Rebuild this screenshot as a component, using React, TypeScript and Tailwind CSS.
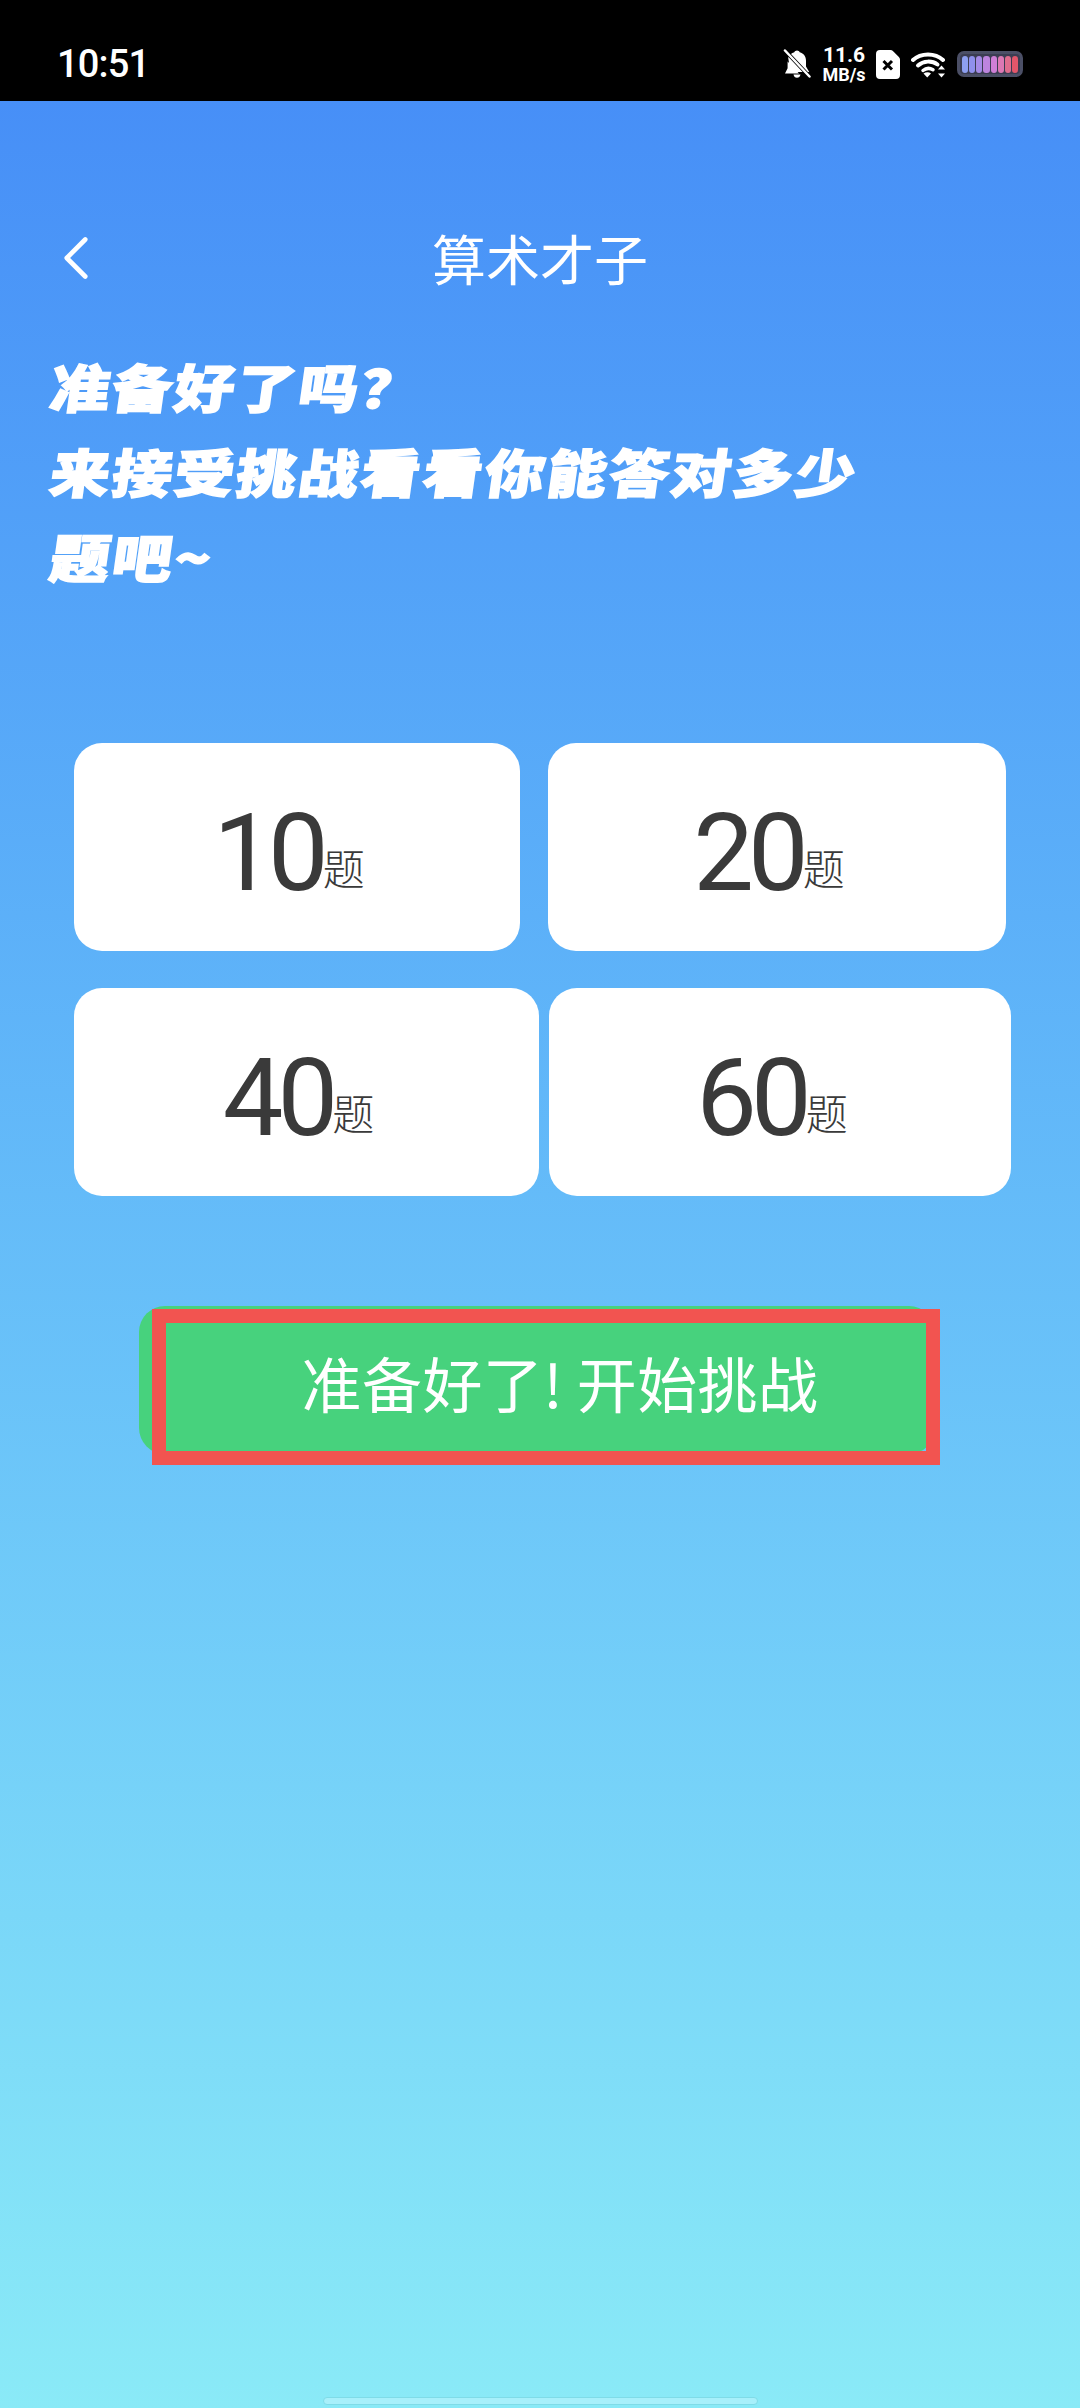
import React from "react";
import { ChevronLeft } from "lucide-react";

const rows = [
  {
    gap: "gap-[28px]",
    cards: [
      { count: "10", width: "w-[446px]" },
      { count: "20", width: "w-[458px]" },
    ],
  },
  {
    gap: "gap-[10px]",
    cards: [
      { count: "40", width: "w-[465px]" },
      { count: "60", width: "w-[462px]" },
    ],
  },
];

const headingLines = ["准备好了吗？", "来接受挑战看看你能答对多少", "题吧~"];

const batteryColors = [
  "#8d9ff0",
  "#8f90ec",
  "#a58be6",
  "#bd84de",
  "#cf7fd6",
  "#dc78b4",
  "#e06d8e",
  "#e2566a",
];

function StatusBar() {
  return (
    <div className="flex h-[101px] items-center bg-black pl-[57px] pr-[57px] pt-[27px] text-white">
      <span className="font-['Roboto',sans-serif] text-[38px] font-medium leading-none tracking-[-0.8px]">
        10:51
      </span>
      <div className="ml-auto flex items-center">
        <svg width="28" height="30" viewBox="0 0 28 30">
          <path
            d="M14 1.500c1.300 0 2.300.7 2.700 1.800 4 1 6.300 4.300 6.300 8.400v5.800l3.200 5.500H7.500L5.200 8.800C6.400 6 8.600 4 11.300 3.300 11.700 2.200 12.700 1.500 14 1.500ZM4.600 12.500 16 24.500H2l2.600-5.300ZM10.500 25.500h7c-.3 2-1.700 3.300-3.500 3.300s-3.200-1.300-3.500-3.300Z"
            fill="#fff"
          />
          <path d="M1.500 1 26 27" stroke="#000" strokeWidth="4" />
          <path d="M2 1.500 26.500 27.500" stroke="#fff" strokeWidth="2.500" strokeLinecap="round" />
        </svg>
        <div className="ml-[11px] flex w-[44px] flex-col items-center font-['Roboto',sans-serif] font-bold leading-none">
          <span className="text-[21px] leading-[21px]">11.6</span>
          <span className="text-[18px] leading-[18px]">MB/s</span>
        </div>
        <svg className="ml-[10px]" width="24" height="29" viewBox="0 0 24 29">
          <path
            d="M4 0h10.500c1 0 1.700.3 2.400 1l6 6c.7.7 1.100 1.500 1.100 2.500V25a4 4 0 0 1-4 4H4a4 4 0 0 1-4-4V4a4 4 0 0 1 4-4Z"
            fill="#fff"
          />
          <path d="M7.500 11 16 19.500M16 11l-8.500 8.500" stroke="#000" strokeWidth="3" />
        </svg>
        <svg className="ml-[11px]" width="35" height="27" viewBox="0 0 35 27">
          <path d="M2 9C10 1.500 24 1.500 32 9" fill="none" stroke="#fff" strokeWidth="4" strokeLinecap="round" />
          <path d="M7 14.500C12.500 9.500 21 9.500 26.500 13.500" fill="none" stroke="#fff" strokeWidth="4" strokeLinecap="round" />
          <path d="M12 19.500c3-2.500 7-2.500 10-.8" fill="none" stroke="#fff" strokeWidth="3.500" strokeLinecap="round" />
          <path d="M12.500 22.500c2.500-1.600 5.500-1.600 7.500 0l-3.800 4Z" fill="#fff" />
          <path d="M30.500 14.500l3.500 4h-7ZM30.500 26.500l-3.500-4h7Z" fill="#fff" />
        </svg>
        <div className="ml-[11px] flex h-[26px] w-[66px] items-center gap-[1px] rounded-[7px] border-[3px] border-[#4b4f66] bg-[#3b3d52] px-[2px]">
          {batteryColors.map((color) => (
            <span
              key={color}
              className="h-[17px] flex-1 rounded-[3px]"
              style={{ backgroundColor: color }}
            />
          ))}
        </div>
      </div>
    </div>
  );
}

export default function App() {
  return (
    <div className="relative flex h-[2408px] w-[1080px] flex-col overflow-hidden font-['Noto_Sans_CJK_SC',sans-serif]">
      <StatusBar />
      <main className="flex flex-1 flex-col bg-gradient-to-b from-[#478ff7] to-[#8aeaf7]">
        <header className="relative mt-[127px] flex h-[60px] items-center justify-center">
          <ChevronLeft
            className="absolute left-[39px] -top-[7px] text-white"
            size={74}
            strokeWidth={1.5}
          />
          <h1 className="text-[54px] font-normal leading-[60px] text-white">算术才子</h1>
        </header>

        <h2 className="mt-[55px] ml-[45px] text-[52px] font-black leading-[85px] tracking-[2px] text-white [-webkit-text-stroke:1.5px_white]">
          {headingLines.map((line) => (
            <span
              key={line}
              className="block origin-bottom-left whitespace-nowrap [transform:skewX(-8deg)_scaleX(1.15)]"
            >
              {line}
            </span>
          ))}
        </h2>

        <div className="mt-[145px] ml-[74px] flex flex-col gap-[37px]">
          {rows.map((row) => (
            <div key={row.cards[0].count} className={`flex ${row.gap}`}>
              {row.cards.map((card) => (
                <div
                  key={card.count}
                  className={`flex h-[208px] items-center justify-center rounded-[28px] bg-white pr-[16px] pt-[11px] text-[#3a3a3a] ${card.width}`}
                >
                  <span className="font-['Roboto',sans-serif] text-[108px] leading-none tracking-[-6px]">
                    {card.count}
                  </span>
                  <span className="mt-[28px] text-[42px] font-light leading-none">题</span>
                </div>
              ))}
            </div>
          ))}
        </div>

        <div className="relative mt-[110px] ml-[139px] flex h-[148px] w-[796px] items-center justify-center rounded-[26px] bg-[#47d27d] pl-[46px] pt-[4px]">
          <span className="text-[60px] font-normal leading-none tracking-[0.4px] text-white">
            准备好了! 开始挑战
          </span>
          <div className="absolute -bottom-[11px] left-[13px] -right-[5px] top-[3px] border-[14px] border-[#f25450]" />
        </div>
      </main>
      <div className="absolute bottom-[3px] left-[323px] h-[8px] w-[435px] rounded-full border border-[#7fdce8] bg-[#a8f0fb]" />
    </div>
  );
}
